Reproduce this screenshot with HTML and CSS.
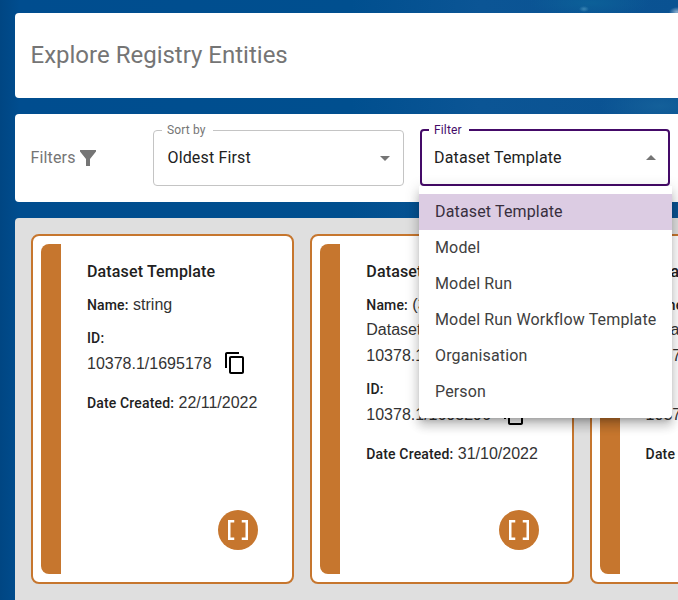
FILE: index.html
```html
<!DOCTYPE html>
<html lang="en">
<head>
<meta charset="utf-8">
<title>Explore Registry Entities</title>
<link rel="stylesheet" href="styles.css">
</head>
<body>
<svg class="sprite" aria-hidden="true">
  <symbol id="copy" viewBox="0 0 24 24"><path d="M16 1H4c-1.1 0-2 .9-2 2v14h2V3h12V1zm3 4H8c-1.1 0-2 .9-2 2v14c0 1.1.9 2 2 2h11c1.100 0 2-.9 2-2V7c0-1.100-.9-2-2-2zm0 16H8V7h11v14z"/></symbol>
  <symbol id="brackets" viewBox="0 0 24 24"><path d="M15 4v2h3v12h-3v2h5V4zM4 20h5v-2H6V6h3V4H4z"/></symbol>
</svg>
<main class="page">
  <header class="panel heading"><h1>Explore Registry Entities</h1></header>
  <section class="panel filters">
    <div class="filters-label">Filters
      <svg viewBox="0 0 16 16" width="16" height="16"><path d="M0 0h16v1.500L10 9v7H6V9L0 1.500z"/></svg>
    </div>
    <div class="select sort">
      <span class="select-label">Sort by</span>
      <span>Oldest First</span>
      <svg class="arrow" viewBox="0 0 24 24"><path d="M7 10l5 5 5-5z"/></svg>
    </div>
    <div class="select open">
      <span class="select-label">Filter</span>
      <span>Dataset Template</span>
      <svg class="arrow" viewBox="0 0 24 24"><path d="M7 10l5 5 5-5z"/></svg>
      <ul class="menu">
        <li class="selected">Dataset Template</li>
        <li>Model</li>
        <li>Model Run</li>
        <li>Model Run Workflow Template</li>
        <li>Organisation</li>
        <li>Person</li>
      </ul>
    </div>
  </section>
  <section class="results">
    <article class="card">
      <div class="bar"></div>
      <div class="body">
        <h2>Dataset Template</h2>
        <p><b>Name:</b> string</p>
        <p><b>ID:</b></p>
        <div class="id">10378.1/1695178 <svg><use href="#copy"/></svg></div>
        <p><b>Date Created:</b> 22/11/2022</p>
        <div class="badge"><svg><use href="#brackets"/></svg></div>
      </div>
    </article>
    <article class="card">
      <div class="bar"></div>
      <div class="body">
        <h2>Dataset Template</h2>
        <p><b>Name:</b> (3)<br>Dataset<br>10378.1</p>
        <p><b>ID:</b></p>
        <div class="id">10378.1/1693296 <svg><use href="#copy"/></svg></div>
        <p><b>Date Created:</b> 31/10/2022</p>
        <div class="badge"><svg><use href="#brackets"/></svg></div>
      </div>
    </article>
    <article class="card">
      <div class="bar"></div>
      <div class="body">
        <h2>Dataset Template</h2>
        <p><b>Name:</b> (3)<br>Dataset<br>10378.1</p>
        <p><b>ID:</b></p>
        <div class="id">10378.1/1693295 <svg><use href="#copy"/></svg></div>
        <p><b>Date Created:</b> 31/10/2022</p>
        <div class="badge"><svg><use href="#brackets"/></svg></div>
      </div>
    </article>
  </section>
</main>
</body>
</html>
```
FILE: styles.css
```css
* { box-sizing: border-box; }
body {
  margin: 0;
  height: 600px;
  overflow: hidden;
  font: 400 16px/24px Roboto, "Liberation Sans", sans-serif;
  letter-spacing: 0.15px;
  color: #212121;
  background:
    radial-gradient(ellipse 5px 3px at 584px 9px, #3a86b4, transparent),
    radial-gradient(ellipse 8px 5px at 677px 12px, #8fb0d0, transparent),
    radial-gradient(ellipse 60px 14px at 590px 3px, #0c6098, transparent),
    radial-gradient(ellipse 60px 20px at 660px 106px, #14609a, transparent),
    linear-gradient(90deg, #004683, #004d8f 20px, #004f8f 350px, #0b5595 480px, #0a5292 678px);
}
h1, h2, p, ul { margin: 0; padding: 0; }
.sprite { display: none; }
.page { width: 870px; padding: 13px 0 0 15px; }
.panel {
  display: flex;
  align-items: center;
  margin-bottom: 16px;
  padding: 0 16px;
  background: #fff;
  border-radius: 4px;
}
.heading { height: 85px; padding: 0 15.5px 2px; }
h1 { font-size: 24px; font-weight: 400; line-height: 32px; letter-spacing: 0; color: #757575; }
.filters { height: 88px; padding-left: 15.5px; }
.filters-label { display: flex; align-items: center; gap: 4px; width: 122.5px; color: #757575; }
.filters-label svg { fill: #757575; }
.select {
  position: relative;
  display: flex;
  align-items: center;
  justify-content: space-between;
  width: 251px;
  height: 56px;
  padding: 0 6px 0 14px;
  border: 1px solid #c4c4c4;
  border-radius: 4px;
}
.sort { margin-right: 16px; padding-left: 13.5px; }
.open { width: 250px; height: 57px; margin-top: -1px; padding: 0 5px 0 12px; border: 2px solid #440a68; }
.arrow { width: 24px; height: 24px; fill: #757575; }
.open .arrow { transform: rotate(180deg); }
.select-label {
  position: absolute;
  top: -8px;
  left: 8px;
  padding: 0 7px 0 5px;
  background: #fff;
  font-size: 12px;
  line-height: 14px;
  color: #757575;
}
.open .select-label { top: -8px; left: 7px; color: #440a68; }
.menu {
  position: absolute;
  z-index: 2;
  top: 55px;
  left: -3px;
  width: 253px;
  padding: 8px 0;
  list-style: none;
  background: #fff;
  border-radius: 0 0 4px 4px;
  box-shadow: 0 5px 5px -3px #0003, 0 8px 10px 1px #00000024, 0 3px 14px 2px #0000001f;
  color: #404040;
}
.menu li { height: 36px; padding: 6px 16px; white-space: nowrap; }
.menu .selected { background: #dccce3; color: #382f3e; }
.results {
  display: grid;
  grid-template-columns: repeat(3, 263.3px);
  gap: 16px;
  height: 400px;
  padding: 16px;
  background: #dfdfdf;
  border-radius: 4px 4px 0 0;
}
.card {
  display: flex;
  height: 350px;
  padding: 8px;
  background: #fff;
  border: 2px solid #c6762e;
  border-radius: 8px;
}
.bar { flex: none; width: 20px; background: #c6762e; border-radius: 8px 0 0 8px; }
.body {
  display: flex;
  flex-direction: column;
  flex: 1;
  padding: 15px 25px 24px 26px;
  font-family: "Liberation Sans", Arial, sans-serif;
  line-height: 25.5px;
  letter-spacing: 0;
  color: #333;
  white-space: nowrap;
}
h2, .body b { font-family: Roboto, sans-serif; font-weight: 500; letter-spacing: 0.15px; color: #212121; }
h2 { margin-bottom: 7px; font-size: 16px; line-height: 25.5px; }
.body b { font-size: 14px; line-height: 1; }
.body p + p { margin-top: 8px; }
.id { display: flex; align-items: center; gap: 11px; height: 25.5px; margin-bottom: 13.5px; }
.id svg { width: 24px; height: 24px; }
.badge {
  display: flex;
  align-items: center;
  justify-content: center;
  width: 40px;
  height: 40px;
  margin: auto 0 0 131px;
  background: #c6762e;
  border-radius: 50%;
}
.card + .card .badge { margin-left: 132.500px; }
.badge svg { width: 30px; height: 30px; fill: #fff; }
```
